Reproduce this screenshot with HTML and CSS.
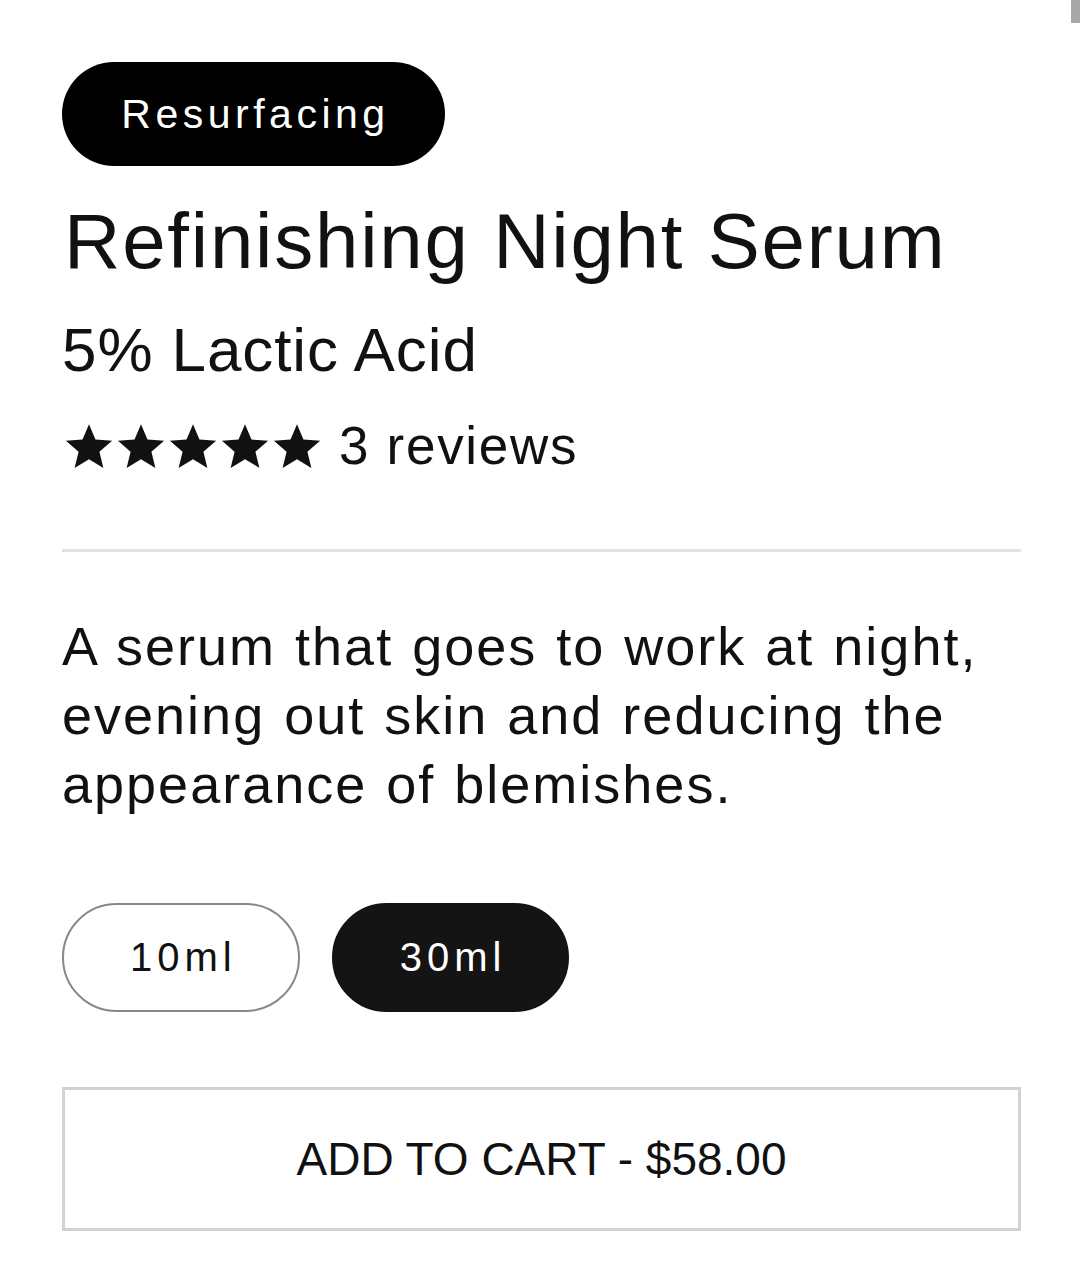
FILE: index.html
```html
<!DOCTYPE html>
<html lang="en">
<head>
    <meta charset="UTF-8">
    <meta name="viewport" content="width=device-width, initial-scale=1.0">
    <title>Refinishing Night Serum</title>
    <link rel="stylesheet" href="styles.css">
</head>
<body>
    <div class="scroll-thumb"></div>

    <div class="product">
        <span class="tag">Resurfacing</span>
        <h1 class="title">Refinishing Night Serum</h1>
        <div class="subtitle">5% Lactic Acid</div>

        <div class="rating">
            <div class="stars">
                <svg viewBox="0 0 24 24"><path d="M12 1.5l3.1 7.4 8 .6-6.1 5.2 1.9 7.8L12 18.3l-6.9 4.2 1.9-7.8L.9 9.5l8-.6z"/></svg>
                <svg viewBox="0 0 24 24"><path d="M12 1.5l3.1 7.4 8 .6-6.1 5.2 1.9 7.8L12 18.3l-6.9 4.2 1.9-7.8L.9 9.5l8-.6z"/></svg>
                <svg viewBox="0 0 24 24"><path d="M12 1.5l3.1 7.4 8 .6-6.1 5.2 1.9 7.8L12 18.3l-6.9 4.2 1.9-7.8L.9 9.5l8-.6z"/></svg>
                <svg viewBox="0 0 24 24"><path d="M12 1.5l3.1 7.4 8 .6-6.1 5.2 1.9 7.8L12 18.3l-6.9 4.2 1.9-7.8L.9 9.5l8-.6z"/></svg>
                <svg viewBox="0 0 24 24"><path d="M12 1.5l3.1 7.4 8 .6-6.1 5.2 1.9 7.8L12 18.3l-6.9 4.2 1.9-7.8L.9 9.5l8-.6z"/></svg>
            </div>
            <span class="review-count">3 reviews</span>
        </div>

        <hr class="divider">

        <p class="description">A serum that goes to work at night,<br>evening out skin and reducing the<br>appearance of blemishes.</p>

        <div class="sizes">
            <button class="size-btn">10ml</button>
            <button class="size-btn active">30ml</button>
        </div>

        <button class="cart-btn">ADD TO CART - $58.00</button>
    </div>
</body>
</html>
```

FILE: styles.css
```css
* {
    margin: 0;
    padding: 0;
    box-sizing: border-box;
}

body {
    background: #fff;
    color: #111;
    font-family: 'Liberation Sans', Arial, sans-serif;
    min-height: 100vh;
    overflow: hidden;
}

.scroll-thumb {
    position: fixed;
    top: 0;
    right: 0;
    width: 9px;
    height: 23px;
    background: #a8a8a8;
}

.product {
    display: flex;
    flex-direction: column;
    align-items: flex-start;
    padding: 62px 59px 0 62px;
}

.tag {
    display: inline-flex;
    align-items: center;
    justify-content: center;
    height: 104px;
    width: 383px;
    padding-left: 4px;
    background: #000;
    color: #fff;
    border-radius: 52px;
    font-size: 41px;
    letter-spacing: 4.5px;
}

.title {
    margin-top: 30px;
    padding-left: 2px;
    font-size: 78px;
    line-height: 90px;
    font-weight: normal;
    letter-spacing: 1.8px;
}

.subtitle {
    margin-top: 26px;
    font-size: 62px;
    line-height: 76px;
    letter-spacing: 0.9px;
}

.rating {
    margin-top: 28px;
    display: flex;
    align-items: center;
    gap: 17px;
    height: 60px;
}

.stars {
    display: flex;
    gap: 2px;
    padding-left: 2px;
}

.stars svg {
    width: 50px;
    height: 50px;
    fill: #111;
}

.review-count {
    font-size: 53px;
    line-height: 60px;
    letter-spacing: 1.7px;
}

.divider {
    align-self: stretch;
    margin-top: 73px;
    border: none;
    height: 3px;
    background: #e2e2e2;
}

.description {
    margin-top: 60px;
    font-size: 54px;
    line-height: 69px;
    letter-spacing: 2px;
    word-spacing: 2px;
}

.sizes {
    margin-top: 84px;
    display: flex;
    gap: 32px;
}

.size-btn {
    height: 109px;
    padding: 0 61px 0 66px;
    border: 2px solid #888;
    border-radius: 55px;
    background: #fff;
    color: #111;
    font-family: inherit;
    font-size: 40px;
    letter-spacing: 5px;
    cursor: pointer;
}

.size-btn.active {
    background: #141414;
    border-color: #141414;
    color: #fff;
}

.cart-btn {
    align-self: stretch;
    margin-top: 75px;
    height: 144px;
    border: 3px solid #d2d2d2;
    background: #fff;
    color: #111;
    font-family: inherit;
    font-size: 46px;
    cursor: pointer;
}
```
